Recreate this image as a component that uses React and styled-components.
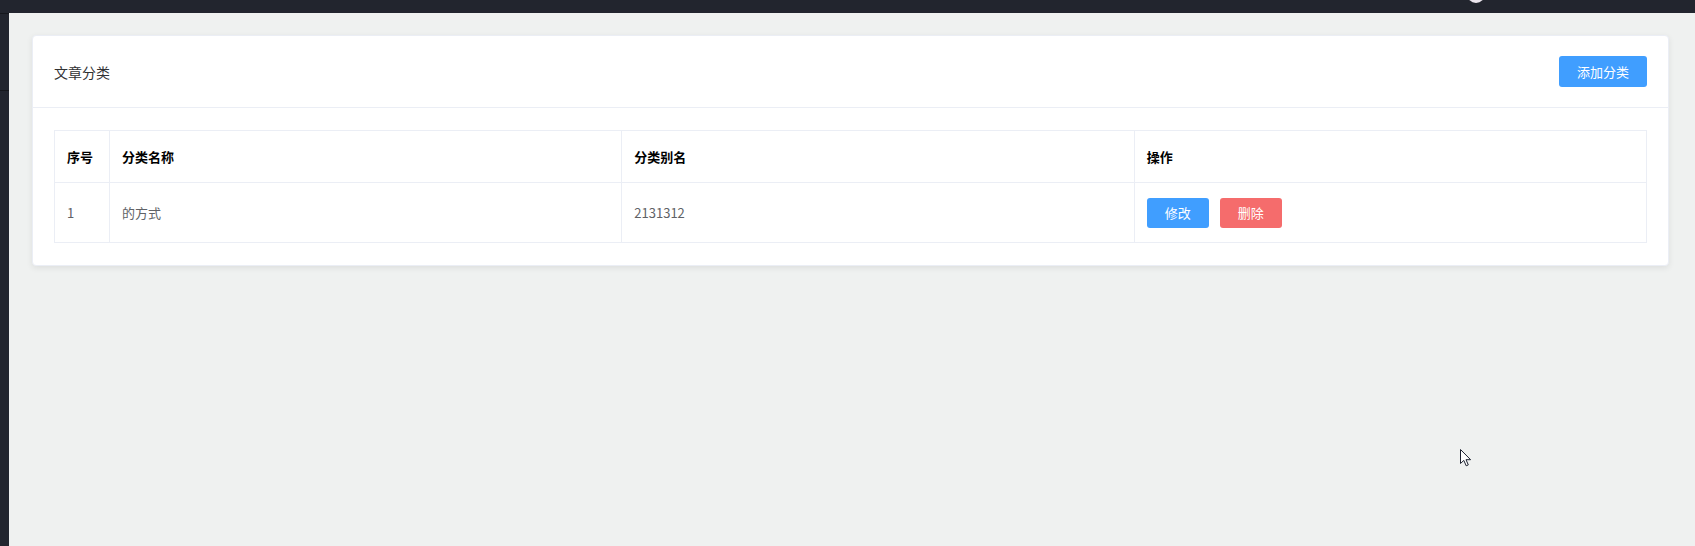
import React from "react";
import styled, { createGlobalStyle } from "styled-components";

const GlobalStyle = createGlobalStyle`
  html, body {
    margin: 0;
    padding: 0;
    height: 100%;
  }
  body {
    font-family: "Noto Sans CJK SC", "Noto Sans", "Liberation Sans", sans-serif;
    background: #eff1f0;
  }
  #root {
    height: 100%;
  }
`;

const rows = [{ id: 1, name: "的方式", alias: "2131312" }];

export default function App() {
  return (
    <>
      <GlobalStyle />
      <Layout>
        <TopBar>
          <Avatar />
        </TopBar>
        <Body>
          <SideStrip>
            <StripLine $top={0} />
            <StripLine $top={77} />
          </SideStrip>
          <Main>
            <Card>
              <CardHeader>
                <Title>文章分类</Title>
                <Button $variant="primary" $h={31} $w={88}>添加分类</Button>
              </CardHeader>
              <CardBody>
                <Table>
                  <colgroup>
                    <col style={{ width: 55 }} />
                    <col />
                    <col />
                    <col />
                  </colgroup>
                  <thead>
                    <tr>
                      <Th>序号</Th>
                      <Th>分类名称</Th>
                      <Th>分类别名</Th>
                      <Th>操作</Th>
                    </tr>
                  </thead>
                  <tbody>
                    {rows.map((r) => (
                      <tr key={r.id}>
                        <Td>{r.id}</Td>
                        <Td>{r.name}</Td>
                        <Td>{r.alias}</Td>
                        <Td>
                          <Actions>
                            <Button $variant="primary" $h={30} $w={62}>修改</Button>
                            <Button $variant="danger" $h={30} $w={62}>删除</Button>
                          </Actions>
                        </Td>
                      </tr>
                    ))}
                  </tbody>
                </Table>
              </CardBody>
            </Card>
          </Main>
        </Body>
        <Cursor viewBox="0 0 12 18" width="12" height="18">
          <path
            d="M0.5 0.5 L0.5 14.5 L3.8 11.4 L6.2 16.8 L8.3 15.9 L6 10.7 L10.6 10.7 Z"
            fill="#fff"
            stroke="#1d2230"
            strokeWidth="1"
            strokeLinejoin="round"
          />
        </Cursor>
      </Layout>
    </>
  );
}

const Layout = styled.div`
  position: relative;
  display: flex;
  flex-direction: column;
  height: 546px;
  overflow: hidden;
`;

const TopBar = styled.header`
  height: 13px;
  flex-shrink: 0;
  background: #22252e;
  display: flex;
  justify-content: flex-end;
  padding-right: 210px;
  overflow: hidden;
`;

const Avatar = styled.div`
  width: 18px;
  height: 18px;
  margin-top: -15px;
  border-radius: 50%;
  background: #ece6ee;
`;

const Body = styled.div`
  flex: 1;
  display: flex;
`;

const SideStrip = styled.aside`
  position: relative;
  width: 9px;
  flex-shrink: 0;
  background: #22252e;
`;

const StripLine = styled.div`
  position: absolute;
  left: 0;
  right: 0;
  top: ${(p) => p.$top}px;
  height: 1px;
  background: #15171c;
`;

const Main = styled.main`
  flex: 1;
  padding: 22px 26px 0 23px;
`;

const Card = styled.section`
  background: #fff;
  border: 1px solid #ebeef5;
  border-radius: 4px;
  box-shadow: 0 2px 6px rgba(0, 0, 0, 0.08);
`;

const CardHeader = styled.div`
  display: flex;
  align-items: center;
  justify-content: space-between;
  padding: 20px 21px 20px 21px;
  border-bottom: 1px solid #ebeef5;
`;

const Title = styled.span`
  font-size: 14px;
  color: #303133;
`;

const Button = styled.button`
  width: ${(p) => p.$w}px;
  height: ${(p) => p.$h}px;
  padding: 0;
  border: none;
  border-radius: 3px;
  font-family: inherit;
  font-size: 13px;
  color: #fff;
  background: ${(p) => (p.$variant === "danger" ? "#f56c6c" : "#409eff")};
  cursor: pointer;
`;

const CardBody = styled.div`
  padding: 22px 21px 22px 21px;
`;

const Table = styled.table`
  width: 100%;
  border-collapse: collapse;
  table-layout: fixed;
  border: 1px solid #ebeef5;
`;

const Th = styled.th`
  height: 51px;
  padding: 0 12px;
  text-align: left;
  font-size: 13px;
  font-weight: 700;
  color: #000;
  border: 1px solid #ebeef5;
`;

const Td = styled.td`
  height: 59px;
  padding: 0 12px;
  font-size: 13px;
  color: #606266;
  border: 1px solid #ebeef5;
`;

const Actions = styled.div`
  display: flex;
  gap: 11px;
`;

const Cursor = styled.svg`
  position: absolute;
  left: 1460px;
  top: 449px;
`;
